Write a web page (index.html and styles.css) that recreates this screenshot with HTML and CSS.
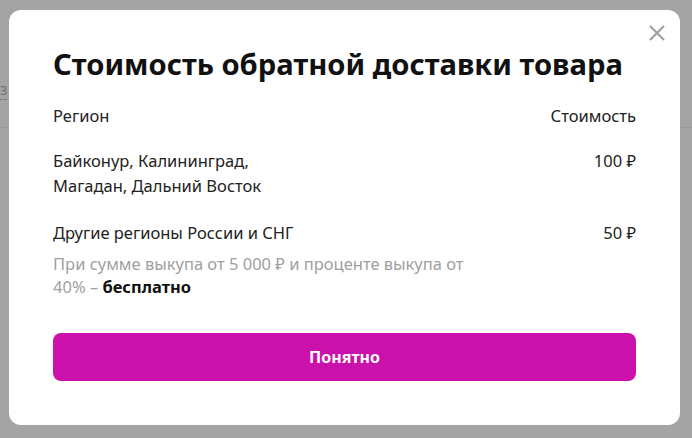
FILE: index.html
```html
<!DOCTYPE html>
<html lang="ru">
<head>
  <meta charset="UTF-8" />
  <meta name="viewport" content="width=device-width, initial-scale=1.0"/>
  <title>Стоимость обратной доставки</title>
  <link rel="stylesheet" href="styles.css">
</head>
<body>
  <div class="page">
    <div class="page-top"><span class="page-link">3</span></div>
    <div class="page-bottom"></div>
  </div>

  <div class="modal">
    <button class="close" aria-label="Закрыть">
      <svg width="16" height="16" viewBox="0 0 16 16">
        <path d="M1 1 L15 15 M15 1 L1 15" stroke="#9e9e9e" stroke-width="2" fill="none"/>
      </svg>
    </button>

    <h2 class="title">Стоимость обратной доставки товара</h2>

    <div class="table">
      <div class="row head">
        <span>Регион</span>
        <span>Стоимость</span>
      </div>
      <div class="row">
        <span>Байконур, Калининград,<br>Магадан, Дальний Восток</span>
        <span>100 ₽</span>
      </div>
      <div class="row last">
        <span>Другие регионы России и СНГ</span>
        <span>50 ₽</span>
      </div>
      <p class="note">При сумме выкупа от 5 000 ₽ и проценте выкупа от<br>40% – <b>бесплатно</b></p>
    </div>

    <button class="ok">Понятно</button>
  </div>
</body>
</html>
```

FILE: styles.css
```css
body {
  margin: 0;
  height: 100vh;
  background-color: #a4a4a4;
  font-family: 'Noto Sans', 'Open Sans', sans-serif;
  overflow: hidden;
}

.page-top {
  height: 128px;
  box-sizing: border-box;
  padding-top: 78px;
  border-bottom: 1px solid #999;
}

.page-link {
  color: #6f6f6f;
  font-size: 13px;
  border-bottom: 1px dashed #7a7a7a;
}

.page-bottom {
  height: 34px;
  border-bottom: 1px solid #a0a0a0;
}

.modal {
  position: absolute;
  top: 10px;
  left: 9px;
  width: 671px;
  height: 415px;
  box-sizing: border-box;
  padding: 36px 44px 44px;
  background-color: white;
  border-radius: 12px;
  display: flex;
  flex-direction: column;
}

.close {
  position: absolute;
  top: 15px;
  right: 15px;
  width: 16px;
  height: 16px;
  padding: 0;
  border: none;
  background: none;
  cursor: pointer;
}

.close svg {
  display: block;
}

.title {
  margin: 0 0 22px;
  font-size: 29.2px;
  line-height: 36px;
  font-weight: 700;
  color: #111;
}

.table {
  font-size: 16.5px;
  color: #222;
}

.row {
  display: flex;
  justify-content: space-between;
  line-height: 25px;
  margin-bottom: 22px;
}

.row.head {
  line-height: 24px;
  margin-bottom: 20px;
}

.row.last {
  margin-bottom: 7px;
}

.note {
  margin: 0;
  color: #a0a0a0;
  line-height: 23px;
}

.note b {
  color: #111;
  font-weight: 700;
}

.ok {
  margin-top: auto;
  height: 48px;
  border: none;
  border-radius: 8px;
  background-color: #cb11ab;
  color: white;
  font-family: inherit;
  font-size: 16px;
  font-weight: 700;
  cursor: pointer;
}
```
